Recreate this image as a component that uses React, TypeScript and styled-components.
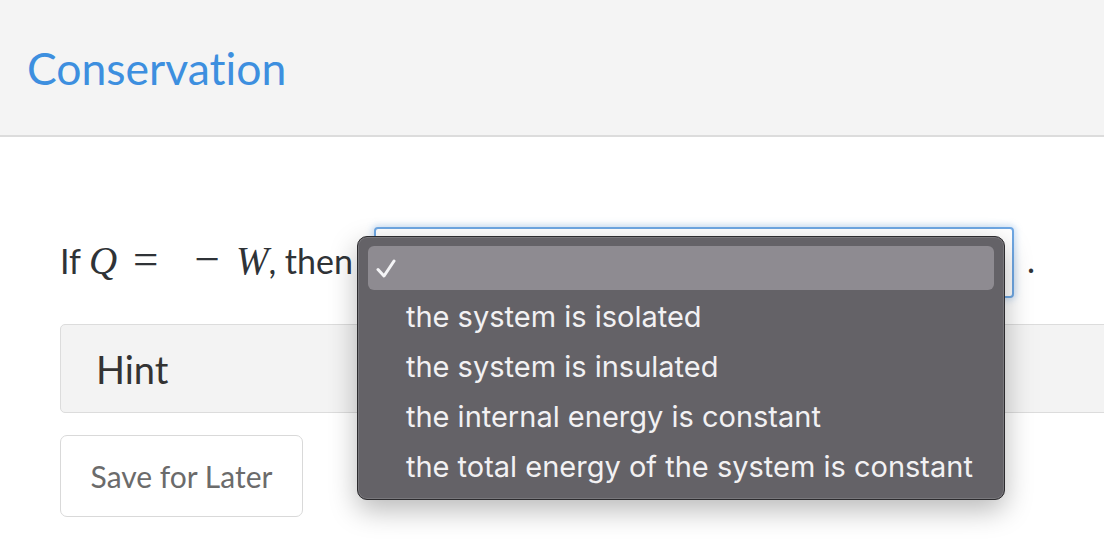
import React from "react";
import styled, { createGlobalStyle } from "styled-components";

const GlobalStyle = createGlobalStyle`
  html, body {
    margin: 0;
    padding: 0;
    background: #fff;
    overflow: hidden;
  }
  body {
    font-family: Lato, "Open Sans", sans-serif;
    font-variant-ligatures: none;
    color: #2f3337;
  }
`;

const Page = styled.div`
  width: 1104px;
  height: 552px;
  overflow: hidden;
`;

const Header = styled.header`
  height: 135px;
  display: flex;
  align-items: center;
  padding-left: 27px;
  background: #f4f4f4;
  border-bottom: 2px solid #dcdcdc;
`;

const Title = styled.h1`
  margin: 0;
  font-family: Lato, sans-serif;
  font-weight: 400;
  font-size: 44.5px;
  color: #3d8fdf;
`;

const Main = styled.main`
  padding: 90px 0 0 60px;
  display: flex;
  flex-direction: column;
`;

const Question = styled.div`
  display: flex;
  align-items: center;
  height: 71px;
`;

const Prompt = styled.span`
  display: inline-flex;
  align-items: baseline;
  font-size: 34px;
  color: #2f3337;
  margin-bottom: 6px;
  white-space: pre;
`;

const MathSym = styled.span<{ $italic?: boolean; $gap?: number; $op?: boolean }>`
  font-family: "Liberation Serif", "DejaVu Serif", serif;
  font-size: ${(p) => (p.$op ? 45 : 39)}px;
  line-height: 1;
  font-style: ${(p) => (p.$italic ? "italic" : "normal")};
  margin-left: ${(p) => p.$gap ?? 0}px;
`;

const SelectWrap = styled.div`
  position: relative;
  margin-left: 21px;
`;

const SelectBox = styled.div`
  width: 636px;
  height: 67px;
  border: 2px solid #6ea7e3;
  border-radius: 4px;
  background: #fff;
  box-shadow: 0 0 6px 2px rgba(110, 167, 227, 0.35);
`;

const Period = styled.span`
  margin-left: 13px;
  font-size: 34px;
  margin-bottom: 6px;
`;

const Popup = styled.div`
  position: absolute;
  left: -17px;
  top: 9px;
  width: 646px;
  padding: 6px 0;
  display: flex;
  flex-direction: column;
  background: #646267;
  border: 1px solid #2c2b2e;
  border-radius: 10px;
  box-shadow: inset 0 0 0 1px rgba(255, 255, 255, 0.14),
    0 10px 28px rgba(0, 0, 0, 0.28);
  font-family: Inter, "Liberation Sans", sans-serif;
  font-size: 29px;
  color: #f2f1f3;
  z-index: 2;
`;

const Option = styled.div<{ $active?: boolean }>`
  position: relative;
  height: 44px;
  margin: 3px 10px;
  padding: 0 0 4px 38px;
  box-sizing: border-box;
  display: flex;
  align-items: center;
  border-radius: 6px;
  background: ${(p) => (p.$active ? "#8e8b91" : "transparent")};
`;

const CheckIcon = styled.svg`
  position: absolute;
  left: 8px;
  top: 13px;
`;

const Hint = styled.div`
  margin-top: 26px;
  margin-right: -20px;
  height: 87px;
  display: flex;
  align-items: center;
  padding-left: 35px;
  background: #f3f3f3;
  border: 1px solid #dcdcdc;
  border-radius: 5px;
  font-size: 38px;
  color: #333;
`;

const SaveButton = styled.button`
  margin-top: 22px;
  width: 243px;
  height: 82px;
  background: #fff;
  border: 1px solid #d9d9d9;
  border-radius: 7px;
  font-family: Lato, sans-serif;
  font-size: 30px;
  color: #6b6b6b;
  padding: 0;
`;

const options = [
  "the system is isolated",
  "the system is insulated",
  "the internal energy is constant",
  "the total energy of the system is constant",
];

function App() {
  return (
    <Page>
      <GlobalStyle />
      <Header>
        <Title>Conservation</Title>
      </Header>
      <Main>
        <Question>
          <Prompt>
            If
            <MathSym $italic $gap={8}>Q</MathSym>
            <MathSym $op $gap={16}>=</MathSym>
            <MathSym $op $gap={36}>−</MathSym>
            <MathSym $italic $gap={16}>W</MathSym>, then
          </Prompt>
          <SelectWrap>
            <SelectBox />
            <Popup>
              <Option $active>
                <CheckIcon width="20" height="19" viewBox="0 0 20 19">
                  <path
                    d="M2 10.5 L8 17 L18 2"
                    fill="none"
                    stroke="#f4f4f6"
                    strokeWidth="3"
                    strokeLinecap="round"
                    strokeLinejoin="round"
                  />
                </CheckIcon>
              </Option>
              {options.map((o) => (
                <Option key={o}>{o}</Option>
              ))}
            </Popup>
          </SelectWrap>
          <Period>.</Period>
        </Question>
        <Hint>Hint</Hint>
        <div>
          <SaveButton>Save for Later</SaveButton>
        </div>
      </Main>
    </Page>
  );
}

export default App;
